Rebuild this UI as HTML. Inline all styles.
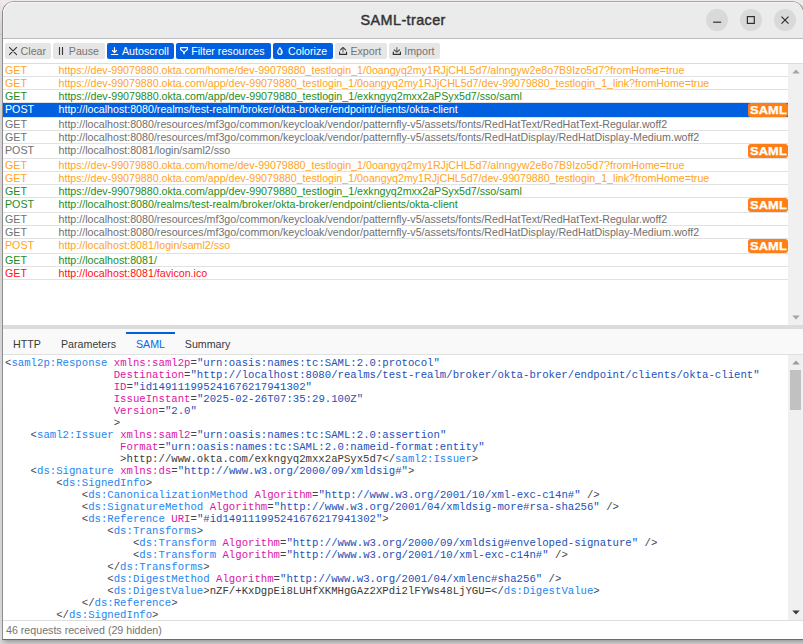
<!DOCTYPE html>
<html><head><meta charset="utf-8">
<style>
*{box-sizing:border-box;margin:0;padding:0}
html,body{width:803px;height:644px;overflow:hidden;background:#efe9e9;font-family:"Liberation Sans",sans-serif}
#shadowL{position:absolute;left:0;top:0;width:2px;height:644px;background:linear-gradient(#efe8e8 0,#ddd6d6 22px,#d8d2d2 34px,#cbbfc6 34px,#cbbfc6 35px,#d5d5d5 35px,#d4d4d4 600px,#dcdcdc 644px)}
#shadowB{position:absolute;left:0;top:640px;width:803px;height:4px;background:linear-gradient(#a5a5a5,#aaaaaa 1px,#b6b6b6 2px,#c2c2c2 3px,#c6c6c6)}
#win{position:absolute;left:2px;top:1px;width:802px;height:639px;border:1px solid #8c8c8c;border-top-color:#aaa5a5;border-bottom-color:#6b6b6b;border-radius:12px 12px 0 0;background:#fff;overflow:hidden}
.abs{position:absolute}
#title{position:absolute;left:0;top:0;width:100%;height:37px;background:#ebebeb;border-bottom:1px solid #bcbcbc;border-radius:11px 11px 0 0;box-shadow:inset 1px 1px 0 #f3f3f3}
#title .t{position:absolute;left:357.6px;top:10px;font-weight:normal;font-size:14.4px;letter-spacing:0.4px;-webkit-text-stroke:0.45px #333;line-height:17px;color:#333}
.wc{position:absolute;top:7px;width:22px;height:22px;border-radius:50%;background:#d9d9d9}
#toolbar{position:absolute;left:0;top:37px;width:100%;height:24px;background:#fff}
.btn{position:absolute;top:4px;height:16px;border-radius:2px;background:#e6e6e6;color:#747474;font-size:10.67px;line-height:16px;white-space:nowrap}
.btn.on{background:#0060df;color:#fff}
.btn span{position:absolute;top:0}
.btn svg{position:absolute;top:4px}
#topline{position:absolute;left:0;top:61px;width:100%;height:1px;background:#dcdcdc}
#list{position:absolute;left:0;top:62px;width:785px;height:261px;background:#fff}
.row{position:absolute;left:0;width:785px;border-bottom:1px solid #e2e2e2;font-size:10.67px;line-height:12px;white-space:nowrap}
.row .in{position:absolute;left:0;top:0;width:100%;height:12px}
.row .m{position:absolute;left:2px;top:0}
.row .u{position:absolute;left:55.5px;top:0}
.row.sel{background:#0060df;color:#fff}
.saml{position:absolute;right:0;top:0;width:40px;height:14px;background:#ff7f16;color:#fff;border-radius:3px;font-weight:bold;font-size:10.4px;line-height:14px}
.saml b{position:absolute;left:2.4px;top:0.8px;transform:scaleX(1.235);transform-origin:0 0;letter-spacing:0.1px;-webkit-text-stroke:0.25px #fff}
.or{color:#ffa424}.gr{color:#1d8c1d}.gy{color:#707070}.rd{color:#ff1212}
#sb1{position:absolute;left:785px;top:62px;width:20px;height:261px;background:#f0f0f0}
#split{position:absolute;left:0;top:323px;width:100%;height:4px;background:#dcdcdc}
#tabs{position:absolute;left:0;top:327px;width:100%;height:26px;background:#f9f9fa;border-bottom:1px solid #e0e0e0;font-size:10.67px;line-height:12px;color:#3a3a3a}
#tabs span{position:absolute;top:9.3px}
#code{position:absolute;left:0;top:353px;width:785px;height:265px;background:#fff;overflow:hidden}
#code pre{position:absolute;left:2px;top:2px;font-family:"Liberation Mono",monospace;font-size:10.67px;line-height:12px;color:#444}
.tg{color:#2485f0}.at{color:#dd14a8}.vl{color:#2350b8}.tx{color:#3a3a3a}
#sb2{position:absolute;left:785px;top:353px;width:20px;height:265px;background:#f0f0f0}
#status{position:absolute;left:0;top:618px;width:100%;height:20px;background:#fff;border-top:1px solid #dedede;font-size:10.67px;line-height:12px;color:#747474}
#status span{position:absolute;left:3px;top:3px}
</style></head><body>
<div id="shadowL"></div>
<div id="shadowB"></div>
<div style="position:absolute;left:0;top:640px;width:8px;height:4px;background:linear-gradient(90deg,rgba(218,218,218,1),rgba(218,218,218,0.5) 3px,rgba(218,218,218,0))"></div>
<div id="win">
  <div id="title">
    <div class="t">SAML-tracer</div>
    <div class="wc" style="left:703px"><svg class="abs" style="left:0;top:0" width="22" height="22"><rect x="7.2" y="12.6" width="8" height="1.2" fill="#2e2e2e"/></svg></div>
    <div class="wc" style="left:737px"><svg class="abs" style="left:0;top:0" width="22" height="22"><rect x="7.4" y="7.6" width="6.9" height="6.8" fill="none" stroke="#2e2e2e" stroke-width="1.2"/></svg></div>
    <div class="wc" style="left:771px"><svg class="abs" style="left:0;top:0" width="22" height="22"><path d="M7.5 7.6L14.5 14.7M14.5 7.6L7.5 14.7" stroke="#2e2e2e" stroke-width="1.2"/></svg></div>
  </div>
  <div id="toolbar">
    <div class="btn" style="left:2px;width:46px"><svg style="left:4px" width="9" height="9"><path d="M0.4 0.4L7.6 7.6M7.6 0.4L0.4 7.6" stroke="#303030" stroke-width="1.05" stroke-linecap="round"/></svg><span style="left:15.6px">Clear</span></div>
    <div class="btn" style="left:50px;width:52px"><svg style="left:5px" width="8" height="9"><path d="M1.5 0.5V7.5M4.5 0.5V7.5" stroke="#3a3a3a" stroke-width="1.15" stroke-linecap="round"/></svg><span style="left:15.8px">Pause</span></div>
    <div class="btn on" style="left:104px;width:67px"><svg style="left:4px" width="8" height="9"><path d="M3.5 0.6V5.3M1.5 3.5L3.5 5.5L5.5 3.5M0.3 7.5H6.8" stroke="#fff" stroke-width="1.15" fill="none" stroke-linecap="round" stroke-linejoin="round"/></svg><span style="left:15px">Autoscroll</span></div>
    <div class="btn on" style="left:173px;width:95px"><svg style="left:4px" width="10" height="9"><path d="M0.6 0.6H7.4V2.5L4 5.3L0.6 2.5Z" stroke="#fff" stroke-width="1.1" fill="none" stroke-linejoin="round"/><path d="M4 5V6.8" stroke="#fff" stroke-width="1.5" stroke-linecap="round"/></svg><span style="left:15.2px">Filter resources</span></div>
    <div class="btn on" style="left:270px;width:60px"><svg style="left:4px" width="7" height="9"><path d="M2.9 0.7C2.2 2.1 0.7 3.3 0.7 5.1A2.25 2.3 0 0 0 5.2 5.1C5.2 3.3 3.6 2.1 2.9 0.7Z" stroke="#fff" stroke-width="1.1" fill="none"/><path d="M3.9 3.7C4.5 4.6 4.6 5.4 4.2 6.3" stroke="#fff" stroke-width="0.9" fill="none"/></svg><span style="left:15.1px">Colorize</span></div>
    <div class="btn" style="left:332px;width:52px"><svg style="left:4px" width="9" height="9"><path d="M0.5 5V7.4H7.5V5" stroke="#333" stroke-width="1.2" fill="none" stroke-linejoin="round" stroke-linecap="round"/><path d="M4 1V5.5" stroke="#777" stroke-width="1.3"/><path d="M1.4 2.9L4 0.5L6.6 2.9" stroke="#444" stroke-width="1.2" fill="none" stroke-linecap="round" stroke-linejoin="round"/></svg><span style="left:15.4px">Export</span></div>
    <div class="btn" style="left:386px;width:51px"><svg style="left:3px" width="9" height="9"><path d="M1.3 5V7.4H8.4V5" stroke="#333" stroke-width="1.2" fill="none" stroke-linejoin="round" stroke-linecap="round"/><path d="M4.85 0.3V4.8" stroke="#777" stroke-width="1.3"/><path d="M2.3 2.9L4.85 5L7.4 2.9" stroke="#555" stroke-width="1.3" fill="none" stroke-linecap="round" stroke-linejoin="round"/></svg><span style="left:15.2px">Import</span></div>
  </div>
  <div id="topline"></div>
  <div id="list">
<div class="row or" style="top:0px;height:13px"><div class="in" style=""><span class="m">GET</span><span class="u">https://dev-99079880.okta.com/home/dev-99079880_testlogin_1/0oangyq2my1RJjCHL5d7/alnngyw2e8o7B9Izo5d7?fromHome=true</span></div></div>
<div class="row or" style="top:13px;height:13px"><div class="in" style=""><span class="m">GET</span><span class="u">https://dev-99079880.okta.com/app/dev-99079880_testlogin_1/0oangyq2my1RJjCHL5d7/dev-99079880_testlogin_1_link?fromHome=true</span></div></div>
<div class="row gr" style="top:26px;height:13px"><div class="in" style=""><span class="m">GET</span><span class="u">https://dev-99079880.okta.com/app/dev-99079880_testlogin_1/exkngyq2mxx2aPSyx5d7/sso/saml</span></div></div>
<div class="row sel" style="top:39px;height:15px"><div class="in" style=""><span class="m">POST</span><span class="u">http://localhost:8080/realms/test-realm/broker/okta-broker/endpoint/clients/okta-client</span></div><div class="saml"><b>SAML</b></div></div>
<div class="row gy" style="top:54px;height:13px"><div class="in" style=""><span class="m">GET</span><span class="u">http://localhost:8080/resources/mf3go/common/keycloak/vendor/patternfly-v5/assets/fonts/RedHatText/RedHatText-Regular.woff2</span></div></div>
<div class="row gy" style="top:67px;height:13px"><div class="in" style=""><span class="m">GET</span><span class="u">http://localhost:8080/resources/mf3go/common/keycloak/vendor/patternfly-v5/assets/fonts/RedHatDisplay/RedHatDisplay-Medium.woff2</span></div></div>
<div class="row gy" style="top:80px;height:15px"><div class="in" style=""><span class="m">POST</span><span class="u">http://localhost:8081/login/saml2/sso</span></div><div class="saml"><b>SAML</b></div></div>
<div class="row or" style="top:95px;height:13px"><div class="in" style=""><span class="m">GET</span><span class="u">https://dev-99079880.okta.com/home/dev-99079880_testlogin_1/0oangyq2my1RJjCHL5d7/alnngyw2e8o7B9Izo5d7?fromHome=true</span></div></div>
<div class="row or" style="top:108px;height:13px"><div class="in" style=""><span class="m">GET</span><span class="u">https://dev-99079880.okta.com/app/dev-99079880_testlogin_1/0oangyq2my1RJjCHL5d7/dev-99079880_testlogin_1_link?fromHome=true</span></div></div>
<div class="row gr" style="top:121px;height:13px"><div class="in" style=""><span class="m">GET</span><span class="u">https://dev-99079880.okta.com/app/dev-99079880_testlogin_1/exkngyq2mxx2aPSyx5d7/sso/saml</span></div></div>
<div class="row gr" style="top:134px;height:15px"><div class="in" style=""><span class="m">POST</span><span class="u">http://localhost:8080/realms/test-realm/broker/okta-broker/endpoint/clients/okta-client</span></div><div class="saml"><b>SAML</b></div></div>
<div class="row gy" style="top:149px;height:13px"><div class="in" style=""><span class="m">GET</span><span class="u">http://localhost:8080/resources/mf3go/common/keycloak/vendor/patternfly-v5/assets/fonts/RedHatText/RedHatText-Regular.woff2</span></div></div>
<div class="row gy" style="top:162px;height:13px"><div class="in" style=""><span class="m">GET</span><span class="u">http://localhost:8080/resources/mf3go/common/keycloak/vendor/patternfly-v5/assets/fonts/RedHatDisplay/RedHatDisplay-Medium.woff2</span></div></div>
<div class="row or" style="top:175px;height:15px"><div class="in" style=""><span class="m">POST</span><span class="u">http://localhost:8081/login/saml2/sso</span></div><div class="saml"><b>SAML</b></div></div>
<div class="row gr" style="top:190px;height:13px"><div class="in" style=""><span class="m">GET</span><span class="u">http://localhost:8081/</span></div></div>
<div class="row rd" style="top:203px;height:13px"><div class="in" style=""><span class="m">GET</span><span class="u">http://localhost:8081/favicon.ico</span></div></div>
  </div>
  <div id="sb1">
    <svg class="abs" style="left:3.6px;top:4.5px" width="9" height="6"><path d="M0.3 4.6H7.7L4 0.6Z" fill="#a3a3a3"/></svg>
    <svg class="abs" style="left:3.6px;top:251px" width="9" height="6"><path d="M0.3 0.6H7.7L4 4.6Z" fill="#a3a3a3"/></svg>
  </div>
  <div id="split"></div>
  <div id="tabs">
    <span style="left:10px">HTTP</span>
    <span style="left:58px">Parameters</span>
    <span style="left:133px;color:#0a68e6">SAML</span>
    <span style="left:181.8px">Summary</span>
    <div class="abs" style="left:123px;top:3px;width:49px;height:2px;background:#0060df"></div>
  </div>
  <div id="code"><pre>
&lt;<span class="tg">saml2p:Response</span> <span class="at">xmlns:saml2p</span>=<span class="vl">"urn:oasis:names:tc:SAML:2.0:protocol"</span>
                 <span class="at">Destination</span>=<span class="vl">"http://localhost:8080/realms/test-realm/broker/okta-broker/endpoint/clients/okta-client"</span>
                 <span class="at">ID</span>=<span class="vl">"id149111995241676217941302"</span>
                 <span class="at">IssueInstant</span>=<span class="vl">"2025-02-26T07:35:29.100Z"</span>
                 <span class="at">Version</span>=<span class="vl">"2.0"</span>
                 &gt;
    &lt;<span class="tg">saml2:Issuer</span> <span class="at">xmlns:saml2</span>=<span class="vl">"urn:oasis:names:tc:SAML:2.0:assertion"</span>
                  <span class="at">Format</span>=<span class="vl">"urn:oasis:names:tc:SAML:2.0:nameid-format:entity"</span>
                  &gt;<span class="tx">http://www.okta.com/exkngyq2mxx2aPSyx5d7</span>&lt;/<span class="tg">saml2:Issuer</span>&gt;
    &lt;<span class="tg">ds:Signature</span> <span class="at">xmlns:ds</span>=<span class="vl">"http://www.w3.org/2000/09/xmldsig#"</span>&gt;
        &lt;<span class="tg">ds:SignedInfo</span>&gt;
            &lt;<span class="tg">ds:CanonicalizationMethod</span> <span class="at">Algorithm</span>=<span class="vl">"http://www.w3.org/2001/10/xml-exc-c14n#"</span> /&gt;
            &lt;<span class="tg">ds:SignatureMethod</span> <span class="at">Algorithm</span>=<span class="vl">"http://www.w3.org/2001/04/xmldsig-more#rsa-sha256"</span> /&gt;
            &lt;<span class="tg">ds:Reference</span> <span class="at">URI</span>=<span class="vl">"#id149111995241676217941302"</span>&gt;
                &lt;<span class="tg">ds:Transforms</span>&gt;
                    &lt;<span class="tg">ds:Transform</span> <span class="at">Algorithm</span>=<span class="vl">"http://www.w3.org/2000/09/xmldsig#enveloped-signature"</span> /&gt;
                    &lt;<span class="tg">ds:Transform</span> <span class="at">Algorithm</span>=<span class="vl">"http://www.w3.org/2001/10/xml-exc-c14n#"</span> /&gt;
                &lt;/<span class="tg">ds:Transforms</span>&gt;
                &lt;<span class="tg">ds:DigestMethod</span> <span class="at">Algorithm</span>=<span class="vl">"http://www.w3.org/2001/04/xmlenc#sha256"</span> /&gt;
                &lt;<span class="tg">ds:DigestValue</span>&gt;<span class="tx">nZF/+KxDgpEi8LUHfXKMHgGAz2XPdi2lFYWs48LjYGU=</span>&lt;/<span class="tg">ds:DigestValue</span>&gt;
            &lt;/<span class="tg">ds:Reference</span>&gt;
        &lt;/<span class="tg">ds:SignedInfo</span>&gt;
        &lt;<span class="tg">ds:SignatureValue</span>&gt;
</pre></div>
  <div id="sb2">
    <svg class="abs" style="left:3.6px;top:5px" width="9" height="6"><path d="M0.3 4.6H7.7L4 0.6Z" fill="#9a9a9a"/></svg>
    <div class="abs" style="left:2px;top:15px;width:11px;height:40px;background:#c1c1c1"></div>
    <svg class="abs" style="left:3.5px;top:254.5px" width="9" height="6"><path d="M0.3 0.6H7.7L4 4.6Z" fill="#3c3c3c"/></svg>
  </div>
  <div id="status"><span>46 requests received (29 hidden)</span></div>
</div>
</body></html>
